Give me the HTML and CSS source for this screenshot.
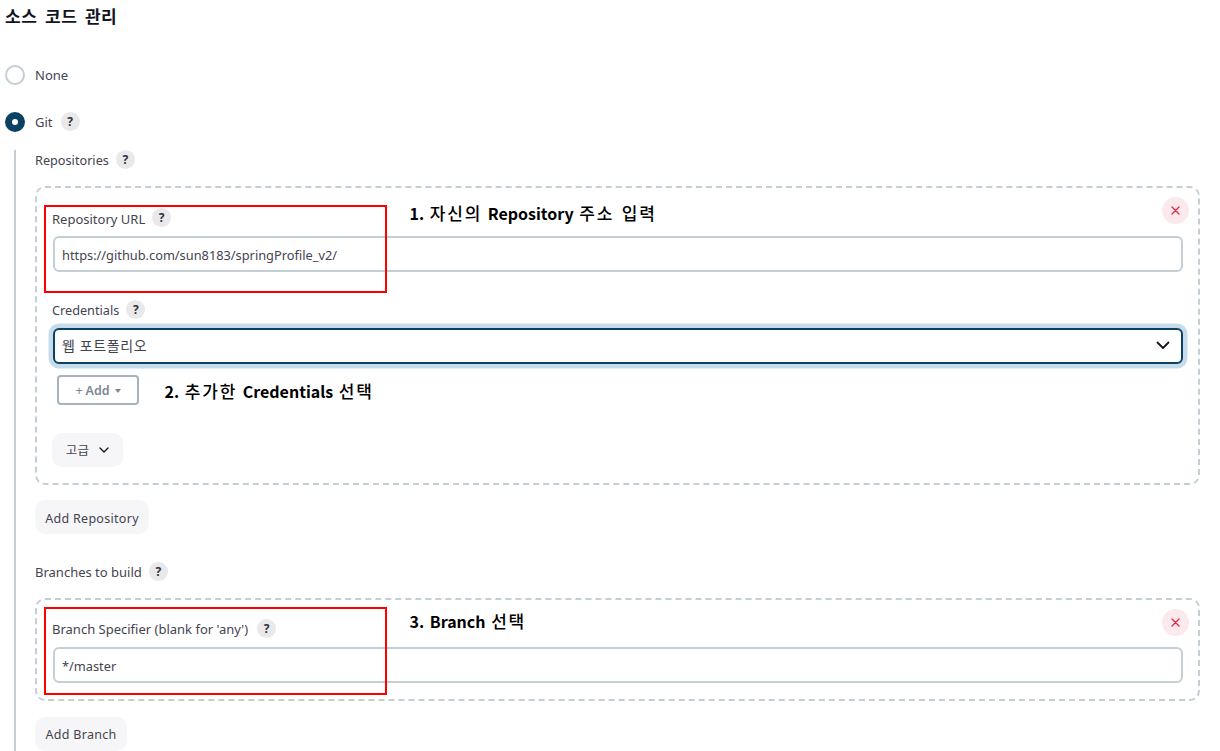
FILE: index.html
```html
<!DOCTYPE html>
<html>
  <head>
    <title>소스 코드 관리</title>
    <link rel="stylesheet" href="styles.css">
  </head>
  <body>
    <h2 class="section-title">소스 코드 관리</h2>

    <div class="radio-row radio-none">
      <span class="radio"></span>
      <span class="label-text">None</span>
    </div>
    <div class="radio-row radio-git">
      <span class="radio radio-checked"></span>
      <span class="label-text">Git</span>
      <span class="help">?</span>
    </div>

    <div class="git-panel">
      <div class="field-label repos-label"><span class="label-text">Repositories</span> <span class="help">?</span></div>

      <div class="repeat-box repo-box">
        <span class="remove-btn">
          <svg width="9" height="9" viewBox="0 0 9 9"><path d="M1 1l7 7M8 1L1 8" stroke="#e6264a" stroke-width="1.3" fill="none" stroke-linecap="round"/></svg>
        </span>
        <div class="field-label url-label"><span class="label-text">Repository URL</span> <span class="help">?</span></div>
        <div class="text-input">https://github.com/sun8183/springProfile_v2/</div>
        <div class="field-label cred-label"><span class="label-text">Credentials</span> <span class="help">?</span></div>
        <div class="text-input select-focus">
          <span class="select-value">웹 포트폴리오</span>
          <svg class="select-arrow" width="14" height="9" viewBox="0 0 14 9"><path d="M1.5 1.5L7 7l5.5-5.5" stroke="#14141f" stroke-width="1.8" fill="none" stroke-linecap="round" stroke-linejoin="round"/></svg>
        </div>
        <div class="add-btn">
          <span class="add-plus">+</span> Add <span class="caret"></span>
        </div>
        <div class="soft-btn advanced-btn">
          <span class="btn-text">고급</span>
          <svg width="10" height="6" viewBox="0 0 10 6"><path d="M1 1l4 4 4-4" stroke="#14141f" stroke-width="1.3" fill="none" stroke-linecap="round" stroke-linejoin="round"/></svg>
        </div>
        <div class="red-box red-box-url"></div>
        <div class="note note-url">1. <span class="ko">자신의</span> Repository <span class="ko">주소 입력</span></div>
        <div class="note note-cred">2. <span class="ko">추가한</span> Credentials <span class="ko">선택</span></div>
      </div>

      <div class="soft-btn add-repo"><span class="btn-text">Add Repository</span></div>

      <div class="field-label branches-label"><span class="label-text">Branches to build</span> <span class="help">?</span></div>

      <div class="repeat-box branch-box">
        <span class="remove-btn">
          <svg width="9" height="9" viewBox="0 0 9 9"><path d="M1 1l7 7M8 1L1 8" stroke="#e6264a" stroke-width="1.3" fill="none" stroke-linecap="round"/></svg>
        </span>
        <div class="field-label branch-label"><span class="label-text">Branch Specifier (blank for 'any')</span> <span class="help">?</span></div>
        <div class="text-input">*/master</div>
        <div class="red-box red-box-branch"></div>
        <div class="note note-branch">3. Branch <span class="ko">선택</span></div>
      </div>

      <div class="soft-btn add-branch"><span class="btn-text">Add Branch</span></div>
    </div>
  </body>
</html>
```

FILE: styles.css
```css
html,
body {
  height: 751px;
  overflow: hidden;
}

body {
  margin: 0;
  padding: 0 20px 0 5px;
  background: #fff;
  color: #44444f;
  font-family: "Noto Sans", "Noto Sans CJK KR", sans-serif;
  font-size: 13px;
  line-height: 18px;
}

.section-title {
  margin: 0;
  padding-top: 4px;
  height: 29px;
  box-sizing: border-box;
  color: #14141f;
  font-family: "Noto Sans CJK KR", sans-serif;
  font-size: 17px;
  line-height: 24px;
  font-weight: 700;
  letter-spacing: 0.6px;
  word-spacing: 3px;
}

.radio-row {
  display: flex;
  align-items: center;
  height: 20px;
}

.radio-none {
  margin-top: 36px;
}

.radio-git {
  margin-top: 27px;
}

.radio {
  width: 20px;
  height: 20px;
  box-sizing: border-box;
  border: 2px solid #c3ced5;
  border-radius: 50%;
  margin-right: 10px;
}

.radio-checked {
  border: 7px solid #0b4263;
  background: #fff;
}

.help {
  display: inline-flex;
  align-items: center;
  justify-content: center;
  width: 19px;
  height: 19px;
  margin-bottom: 1px;
  border-radius: 50%;
  background: #e9e9ec;
  color: #30303a;
  font-size: 12px;
  font-weight: 700;
  margin-left: 4px;
  vertical-align: middle;
}

.radio-row .help {
  margin-left: 8px;
}

.git-panel {
  margin: 18px 0 0 9px;
  padding-left: 19px;
  border-left: 2px solid #c3ced5;
  height: 601px;
  box-sizing: border-box;
}

.field-label {
  display: flex;
  align-items: center;
  gap: 3px;
  height: 20px;
  white-space: nowrap;
}

.repos-label .label-text,
.cred-label .label-text {
  font-size: 12.7px;
}

.repeat-box {
  position: relative;
  margin: 16px 0 0 0;
  border: 2px dashed #c3ced5;
  border-radius: 10px;
  box-sizing: border-box;
  padding: 0 15px 0 15px;
}

.repo-box {
  height: 299px;
}

.branch-box {
  height: 103px;
  margin-top: 16px;
}

.url-label {
  margin-top: 20px;
}

.url-label .label-text {
  padding-top: 1px;
}

.branch-label {
  margin-top: 19px;
  gap: 5px;
}

.text-input {
  display: flex;
  align-items: center;
  position: relative;
  height: 36px;
  margin: 8px 0 0 1px;
  padding: 2px 7px 0;
  border: 2px solid #c3ced5;
  border-radius: 6px;
  box-sizing: border-box;
  background: #fff;
  font-size: 12.8px;
}

.cred-label {
  margin-top: 28px;
}

.select-focus {
  margin-top: 8px;
  padding-top: 0;
  border-color: #0b4263;
  box-shadow: 0 0 0 4.5px #c6dcea;
}

.select-value {
  font-size: 14px;
  letter-spacing: 0.6px;
}

.select-arrow {
  position: absolute;
  right: 11px;
  top: 11px;
}

.add-btn {
  display: flex;
  align-items: center;
  justify-content: center;
  gap: 3px;
  width: 82px;
  height: 30px;
  margin: 11px 0 0 5px;
  padding-top: 1px;
  border: 2px solid #a6b2bd;
  border-radius: 4px;
  box-sizing: border-box;
  color: #7d8596;
  font-size: 12.5px;
  font-weight: 600;
}

.add-plus {
  font-weight: 400;
}

.caret {
  border: 3.5px solid transparent;
  border-top: 4px solid #7d8596;
  border-bottom: 0;
  margin-left: 2px;
}

.soft-btn {
  display: inline-flex;
  align-items: center;
  justify-content: center;
  gap: 10px;
  height: 34px;
  border-radius: 10px;
  background: #f6f6f8;
  font-size: 12.5px;
  letter-spacing: 0.3px;
}

.btn-text {
  padding-top: 2px;
}

.advanced-btn {
  width: 71px;
  margin-top: 28px;
}

.add-repo {
  width: 114px;
  margin-top: 15px;
}

.add-repo .btn-text {
  padding-top: 3px;
}

.branches-label {
  margin-top: 28px;
}

.add-branch {
  width: 92px;
  margin-top: 16px;
}

.add-branch .btn-text {
  padding-top: 1px;
}

.remove-btn {
  position: absolute;
  right: 9px;
  top: 9px;
  display: flex;
  align-items: center;
  justify-content: center;
  width: 27px;
  height: 27px;
  border-radius: 50%;
  background: #fce9ec;
}

.red-box {
  position: absolute;
  left: 7px;
  width: 343px;
  height: 88px;
  box-sizing: border-box;
  border: 2px solid #f00;
}

.red-box-url {
  top: 17px;
}

.red-box-branch {
  top: 7px;
}

.note {
  position: absolute;
  color: #000;
  font-family: "Noto Sans CJK KR", sans-serif;
  font-size: 16px;
  line-height: 22px;
  font-weight: 700;
  white-space: nowrap;
  word-spacing: 2px;
}

.ko {
  font-size: 17px;
  font-weight: 500;
  letter-spacing: 1.8px;
}

.note-url {
  left: 372.5px;
  top: 14px;
}

.note-cred {
  left: 127.5px;
  top: 192px;
}

.note-branch {
  left: 372.5px;
  top: 10px;
}
```
